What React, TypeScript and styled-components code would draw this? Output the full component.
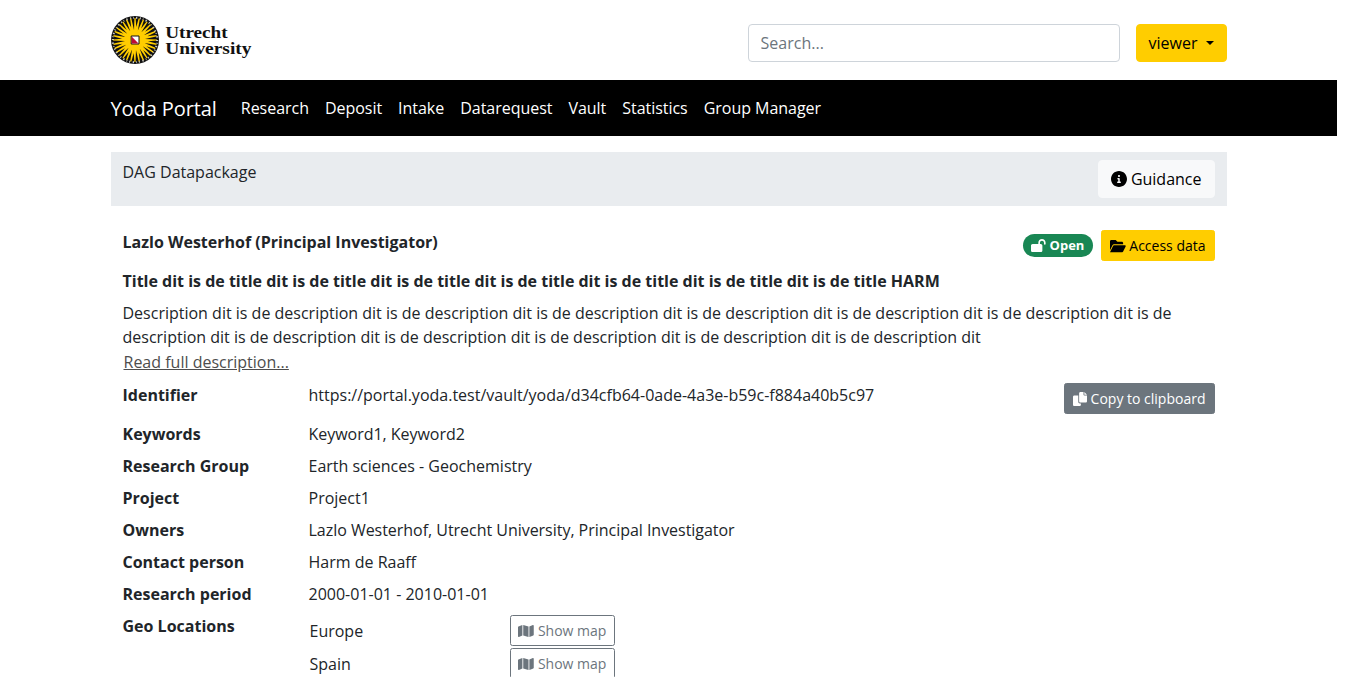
import React from 'react';
import styled, { createGlobalStyle, css } from 'styled-components';

const GlobalStyle = createGlobalStyle`
  *, *::before, *::after { box-sizing: border-box; }
  html, body { margin: 0; height: 677px; overflow: hidden; background: #fff; }
  body {
    font-family: "Open Sans", "Liberation Sans", sans-serif;
    font-size: 16px;
    line-height: 1.5;
    color: #212529;
  }
`;

const Page = styled.div`
  width: 1337px;
  height: 677px;
  overflow: hidden;
`;

const Container = styled.div`
  width: 1140px;
  margin: 0 auto;
  padding: 0 12px;
`;

const Header = styled(Container)`
  display: flex;
  align-items: center;
  height: 80px;
`;

const Logo = styled.svg`
  display: block;
  margin-right: auto;
`;

const SearchInput = styled.input`
  width: 372px;
  height: 38px;
  margin: 6px 16px 0 0;
  padding: 6px 12px;
  border: 1px solid #ced4da;
  border-radius: 4px;
  font: inherit;
  color: #212529;
  &::placeholder { color: #6c757d; opacity: 1; }
`;

type Variant = 'primary' | 'light' | 'secondary' | 'outline';

const variants = {
  primary: css`background: #ffcd00; border-color: #ffcd00; color: #000;`,
  light: css`background: #f8f9fa; border-color: #f8f9fa; color: #000;`,
  secondary: css`background: #6c757d; border-color: #6c757d; color: #fff;`,
  outline: css`background: transparent; border-color: #6c757d; color: #6c757d;`,
};

const Button = styled.button<{ $variant: Variant; $small?: boolean }>`
  display: block;
  flex: none;
  margin: 0;
  padding: ${p => (p.$small ? '4px 8px' : '6px 12px')};
  border: 1px solid;
  border-radius: ${p => (p.$small ? '2.5px' : '4px')};
  font-family: inherit;
  font-size: ${p => (p.$small ? '14px' : '16px')};
  line-height: 1.5;
  white-space: nowrap;
  ${p => variants[p.$variant]}
`;

const UserButton = styled(Button)`
  margin-top: 6px;
  &::after {
    content: "";
    display: inline-block;
    margin-left: 8px;
    vertical-align: 4px;
    border-top: 4.8px solid;
    border-left: 4.8px solid transparent;
    border-right: 4.8px solid transparent;
  }
`;

const NavBar = styled.nav`
  height: 56px;
  background: #000;
`;

const NavInner = styled(Container)`
  display: flex;
  align-items: center;
  height: 56px;
`;

const Brand = styled.a`
  margin-right: 16px;
  padding-top: 2px;
  font-size: 20px;
  line-height: 30px;
  letter-spacing: -0.09px;
  color: #fff;
`;

const NavLink = styled.a`
  padding: 8px;
  letter-spacing: -0.03px;
  color: #fff;
`;

const PackageBar = styled.div`
  display: flex;
  justify-content: space-between;
  align-items: flex-start;
  height: 54px;
  margin-top: 16px;
  padding: 8px 12px;
  background: #e9ecef;
`;

const Details = styled.main`
  padding: 24px 12px 0;
`;

const AuthorRow = styled.div`
  display: flex;
  align-items: flex-start;
  height: 39px;
`;

const Author = styled.strong`
  margin-right: auto;
`;

const Badge = styled.span`
  height: 23px;
  margin: 4px 8px 0 0;
  padding: 4px 8.5px 5px;
  border-radius: 50rem;
  background: #198754;
  color: #fff;
  font-size: 13px;
  font-weight: 700;
  line-height: 14px;
  white-space: nowrap;
`;

const Title = styled.div`
  margin-bottom: 8px;
  font-weight: 700;
`;

const Description = styled.div`
  width: 1092px;
`;

const ReadMore = styled.button`
  display: block;
  margin: 0 0 8px;
  padding: 0;
  border: 1px solid transparent;
  background: none;
  font: inherit;
  color: #4d4d4d;
  text-decoration: underline;
`;

const Field = styled.div`
  display: flex;
  align-items: flex-start;
  margin-bottom: 8px;
`;

const Label = styled.strong`
  flex: 0 0 186px;
`;

const Value = styled.div<{ $tight?: boolean }>`
  flex: 1;
  letter-spacing: ${p => (p.$tight ? '-0.03px' : 'normal')};
`;

const Location = styled.div`
  display: grid;
  grid-template-columns: 200px auto;
  justify-content: start;
  align-items: center;
  height: 33px;
  padding: 0 1px;
`;

const IconSvg = styled.svg<{ $nudge: boolean }>`
  height: 1em;
  margin: ${p => (p.$nudge ? '0 0.5px 0 -0.5px' : '0')};
  overflow: visible;
  vertical-align: -0.125em;
`;

const icons = {
  info: { w: 512, d: 'M256 0C114.6 0 0 114.6 0 256s114.6 256 256 256s256-114.6 256-256S397.4 0 256 0zM256 128c17.67 0 32 14.33 32 32c0 17.67-14.33 32-32 32S224 177.7 224 160C224 142.3 238.3 128 256 128zM296 384h-80C202.8 384 192 373.3 192 360s10.75-24 24-24h16v-64H224c-13.25 0-24-10.75-24-24S210.8 224 224 224h32c13.25 0 24 10.75 24 24v88h16c13.25 0 24 10.75 24 24S309.3 384 296 384z' },
  lockOpen: { w: 576, d: 'M352 192H384C419.3 192 448 220.7 448 256V448C448 483.3 419.3 512 384 512H64C28.65 512 0 483.3 0 448V256C0 220.7 28.65 192 64 192H288V144C288 64.47 352.5 0 432 0C511.5 0 576 64.47 576 144V192C576 209.7 561.7 224 544 224C526.3 224 512 209.7 512 192V144C512 99.82 476.2 64 432 64C387.8 64 352 99.82 352 144V192z' },
  folder: { w: 576, d: 'M147.8 192H480V144C480 117.5 458.5 96 432 96h-160l-64-64h-160C21.49 32 0 53.49 0 80v328.4l90.54-181.1C101.4 205.6 123.4 192 147.8 192zM543.1 224H147.8C135.7 224 124.6 230.8 119.2 241.7L0 480h447.1c12.12 0 23.2-6.852 28.62-17.69l96-192C583.2 249 567.7 224 543.1 224z' },
  copy: { w: 512, d: 'M384 96L384 0h-112c-26.51 0-48 21.49-48 48v288c0 26.51 21.49 48 48 48H464c26.51 0 48-21.49 48-48V128h-95.1C398.4 128 384 113.6 384 96zM416 0v96h96L416 0zM192 352V128h-144c-26.51 0-48 21.49-48 48v288c0 26.51 21.49 48 48 48h192c26.51 0 48-21.49 48-48L288 416h-32C220.7 416 192 387.3 192 352z' },
  map: { w: 576, d: 'M384 476.1L192 421.2V35.93L384 90.79V476.1zM416 88.37L543.1 37.53C558.9 31.23 576 42.84 576 59.82V394.6C576 404.4 570 413.2 560.9 416.9L416 474.8V88.37zM15.09 95.13L160 37.17V423.6L32.91 474.5C17.15 480.8 0 469.2 0 452.2V117.4C0 107.6 5.975 98.78 15.09 95.13V95.13z' },
};

const Icon = ({ name, nudge = false }: { name: keyof typeof icons; nudge?: boolean }) => (
  <IconSvg $nudge={nudge} viewBox={`0 0 ${icons[name].w} 512`} aria-hidden="true">
    <path fill="currentColor" d={icons[name].d} />
  </IconSvg>
);

const RAYS = 32;
const rays = Array.from({ length: RAYS }, (_, i) => {
  const angle = ((i + 0.5) * 2 * Math.PI) / RAYS;
  const half = (Math.PI / RAYS) * 0.74;
  const inner = i % 2 ? 10 : 13;
  const at = (r: number, a: number) => `${(24 + r * Math.sin(a)).toFixed(2)} ${(24 - r * Math.cos(a)).toFixed(2)}`;
  return `M${at(inner, angle)}L${at(22.5, angle - half)}L${at(22.5, angle + half)}Z`;
}).join('');

const UniversityLogo = () => (
  <Logo width="142" height="48" viewBox="0 0 142 48" role="img" aria-label="Utrecht University">
    <circle cx="24" cy="24" r="24" fill="#111" />
    <circle cx="24" cy="24" r="22" fill="#ffcd00" />
    <path d={rays} fill="#111" />
    <circle cx="24" cy="24" r="22.2" fill="none" stroke="#fff" strokeOpacity=".75" strokeWidth="2" strokeDasharray="1 1.9 .7 2.4 1.3 2.6" />
    <path d="M20.2 20h7.8v8h-7.8z" fill="#fff" stroke="#111" strokeWidth="1" />
    <path d="M20.7 20.5L27.5 27.5H20.7z" fill="#c00a35" />
    <g fill="#111" fontFamily="Liberation Serif, serif" fontWeight="700" fontSize="17">
      <text x="54.2" y="21.8" textLength="62.5" lengthAdjust="spacingAndGlyphs">Utrecht</text>
      <text x="54.2" y="37.8" textLength="86.3" lengthAdjust="spacingAndGlyphs">University</text>
    </g>
  </Logo>
);

const navItems = ['Research', 'Deposit', 'Intake', 'Datarequest', 'Vault', 'Statistics', 'Group Manager'];

const fields: [string, string][] = [
  ['Keywords', 'Keyword1, Keyword2'],
  ['Research Group', 'Earth sciences - Geochemistry'],
  ['Project', 'Project1'],
  ['Owners', 'Lazlo Westerhof, Utrecht University, Principal Investigator'],
  ['Contact person', 'Harm de Raaff'],
  ['Research period', '2000-01-01 - 2010-01-01'],
];

export default function App() {
  return (
    <Page>
      <GlobalStyle />
      <Header as="header">
        <UniversityLogo />
        <SearchInput placeholder="Search..." />
        <UserButton $variant="primary">viewer</UserButton>
      </Header>
      <NavBar>
        <NavInner>
          <Brand>Yoda Portal</Brand>
          {navItems.map(item => <NavLink key={item}>{item}</NavLink>)}
        </NavInner>
      </NavBar>
      <Container>
        <PackageBar>
          <span>DAG Datapackage</span>
          <Button $variant="light"><Icon name="info" /> Guidance</Button>
        </PackageBar>
        <Details>
          <AuthorRow>
            <Author>Lazlo Westerhof (Principal Investigator)</Author>
            <Badge><Icon name="lockOpen" nudge /> Open</Badge>
            <Button $variant="primary" $small><Icon name="folder" /> Access data</Button>
          </AuthorRow>
          <Title>{'Title dit is de ' + 'title dit is de '.repeat(6) + 'title HARM'}</Title>
          <Description>{'Description dit is de ' + 'description dit is de '.repeat(11) + 'description dit'}</Description>
          <ReadMore>Read full description...</ReadMore>
          <Field>
            <Label>Identifier</Label>
            <Value>https://portal.yoda.test/vault/yoda/d34cfb64-0ade-4a3e-b59c-f884a40b5c97</Value>
            <Button $variant="secondary" $small><Icon name="copy" /> Copy to clipboard</Button>
          </Field>
          {fields.map(([label, value]) => (
            <Field key={label}>
              <Label>{label}</Label>
              <Value $tight={value.includes(',')}>{value}</Value>
            </Field>
          ))}
          <Field>
            <Label>Geo Locations</Label>
            <Value>
              {['Europe', 'Spain'].map(place => (
                <Location key={place}>
                  <span>{place}</span>
                  <Button $variant="outline" $small><Icon name="map" nudge /> Show map</Button>
                </Location>
              ))}
            </Value>
          </Field>
        </Details>
      </Container>
    </Page>
  );
}
